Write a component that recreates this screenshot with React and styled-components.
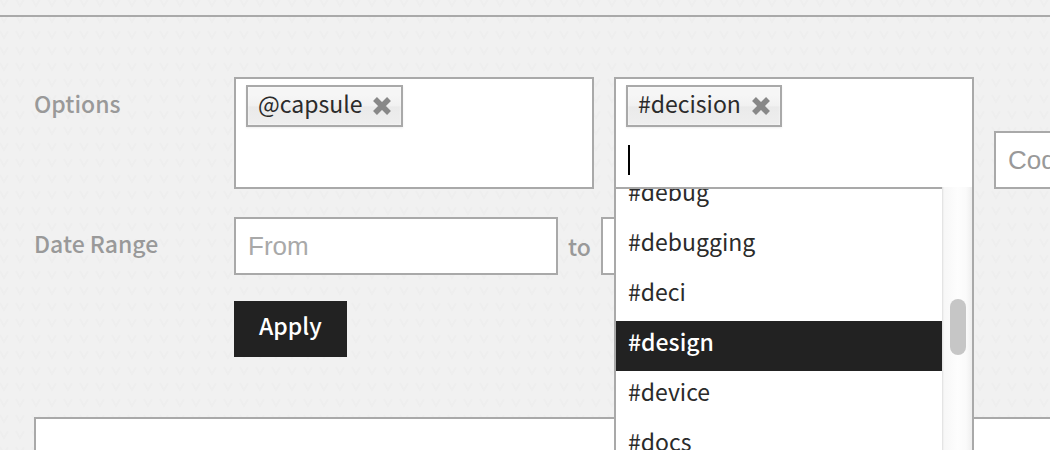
import React from "react";
import styled, { createGlobalStyle, css } from "styled-components";

const ink = "#2b2b2b";
const line = "#a9a9a9";
const muted = "#999";
const dark = "#222";
const textFont = `"Noto Sans CJK SC", "Open Sans", sans-serif`;
const fieldFont = `"Liberation Sans", Arial, sans-serif`;

const chevrons = encodeURIComponent(
  `<svg xmlns="http://www.w3.org/2000/svg" width="16" height="16"><path d="M4 1 8 8 12 1" fill="none" stroke="#eee" stroke-width="2"/></svg>`
);

const GlobalStyle = createGlobalStyle`
  *, *::before, *::after { box-sizing: border-box; }
  body {
    margin: 0;
    overflow: hidden;
    background: #f1f1f1 url("data:image/svg+xml,${chevrons}") -4px -2px;
    color: ${ink};
    font: 23px/40px ${textFont};
  }
`;

const Page = styled.div`
  display: flex;
  flex-direction: column;
  height: 100vh;
`;

const TopBar = styled.header`
  flex: none;
  height: 17px;
  border-bottom: 2px solid ${line};
`;

const Filters = styled.form`
  display: flex;
  flex-direction: column;
  flex: none;
  gap: 28px;
  padding: 60px 0 60px 34px;
`;

const Row = styled.div`
  display: flex;
  align-items: ${(p) => p.$align || "flex-end"};
  gap: ${(p) => p.$gap}px;
`;

const Label = styled.label`
  flex: none;
  align-self: flex-start;
  width: ${(p) => 200 - p.$gap}px;
  padding-top: 6px;
  color: ${muted};
  font-weight: 500;
`;

const boxed = css`
  flex: none;
  border: 2px solid ${line};
  background: #fff;
`;

const TokenBox = styled.div`
  ${boxed}
  position: relative;
  width: 360px;
  min-height: 112px;
  padding: 6px 10px;
`;

const Token = styled.span`
  display: flex;
  gap: 10px;
  width: fit-content;
  height: 42px;
  padding: 0 9px 0 10px;
  border: 2px solid ${line};
  background: linear-gradient(#f6f6f6 20%, #f1f1f1 50%, #eaeaea 52%, #eee);
  box-shadow: inset 0 0 2px #fff, 0 1px 2px #eee;
  line-height: 32px;
`;

const RemoveButton = styled.button`
  display: flex;
  align-items: center;
  padding: 0;
  border: 0;
  background: none;
  color: #888;
`;

const SearchLine = styled.div`
  display: flex;
  align-items: center;
  height: 50px;
  margin-top: 4px;
  padding: 8px 0 0 2px;
`;

const Caret = styled.span`
  width: 2px;
  height: 30px;
  background: #000;
`;

const SearchInput = styled.input`
  flex: 1;
  min-width: 0;
  border: 0;
  outline: 0;
  background: none;
  font: inherit;
  caret-color: transparent;
`;

const Field = styled.input`
  ${boxed}
  width: 324px;
  height: 58px;
  padding: 0 12px;
  font: 26px/30px ${fieldFont};
  &::placeholder { color: ${(p) => p.$tone || "#a9a9a9"}; opacity: 1; }
`;

const Between = styled.span`
  color: ${muted};
  font-weight: 500;
`;

const Apply = styled.button`
  align-self: flex-start;
  height: 56px;
  margin: -2px 0 0 200px;
  padding: 0 25px 8px;
  border: 0;
  background: ${dark};
  color: #fff;
  font: 500 23px/40px ${textFont};
`;

const Menu = styled.div`
  position: absolute;
  z-index: 1;
  top: 100%;
  left: -2px;
  right: -2px;
  display: flex;
  border: solid ${line};
  border-width: 0 2px 2px;
  background: #fff;
`;

const Options = styled.ul`
  display: flex;
  flex: 1;
  flex-direction: column;
  justify-content: flex-end;
  height: 284px;
  margin: 0;
  padding: 0;
  overflow: hidden;
  border-top: 2px solid ${line};
  list-style: none;
`;

const Option = styled.li`
  flex: none;
  height: 50px;
  padding-left: 12px;
  ${(p) => p.$active && css`
    background: ${dark};
    color: #fff;
    font-weight: 500;
  `}
`;

const Track = styled.div`
  width: 30px;
  padding: 112px 6px 0 8px;
  background: linear-gradient(90deg, #dedede, #f7f7f7 2px, #fdfdfd 16px, #fafafa 24px, #efefef);
`;

const Thumb = styled.div`
  height: 56px;
  border-radius: 8px;
  background: #c6c6c6;
`;

const Results = styled.section`
  flex: 1;
  margin-left: 34px;
  border: solid ${line};
  border-width: 2px 0 0 2px;
  background: #fff;
`;

function Tag({ name }) {
  return (
    <Token>
      {name}
      <RemoveButton type="button" aria-label={`Remove ${name}`}>
        <svg width="20" height="20" viewBox="0 0 20 20" fill="none" stroke="currentColor" strokeWidth="5.5">
          <path d="M3 3 17 17M17 3 3 17" />
        </svg>
      </RemoveButton>
    </Token>
  );
}

const tags = ["#debug", "#debugging", "#deci", "#design", "#device", "#docs"];

export default function App() {
  return (
    <Page>
      <GlobalStyle />
      <TopBar />
      <Filters onSubmit={(e) => e.preventDefault()}>
        <Row $gap={20}>
          <Label $gap={20} htmlFor="tag-search">Options</Label>
          <TokenBox>
            <Tag name="@capsule" />
          </TokenBox>
          <TokenBox>
            <Tag name="#decision" />
            <SearchLine>
              <Caret />
              <SearchInput id="tag-search" autoComplete="off" />
            </SearchLine>
            <Menu>
              <Options role="listbox" aria-label="Tags">
                {tags.map((tag) => (
                  <Option key={tag} role="option" aria-selected={tag === "#design"} $active={tag === "#design"}>
                    {tag}
                  </Option>
                ))}
              </Options>
              <Track>
                <Thumb />
              </Track>
            </Menu>
          </TokenBox>
          <Field $tone="#999" placeholder="Code" aria-label="Code" />
        </Row>
        <Row $align="center" $gap={10}>
          <Label $gap={10} htmlFor="from">Date Range</Label>
          <Field id="from" placeholder="From" />
          <Between>to</Between>
          <Field placeholder="To" aria-label="To" />
        </Row>
        <Apply type="submit">Apply</Apply>
      </Filters>
      <Results />
    </Page>
  );
}
